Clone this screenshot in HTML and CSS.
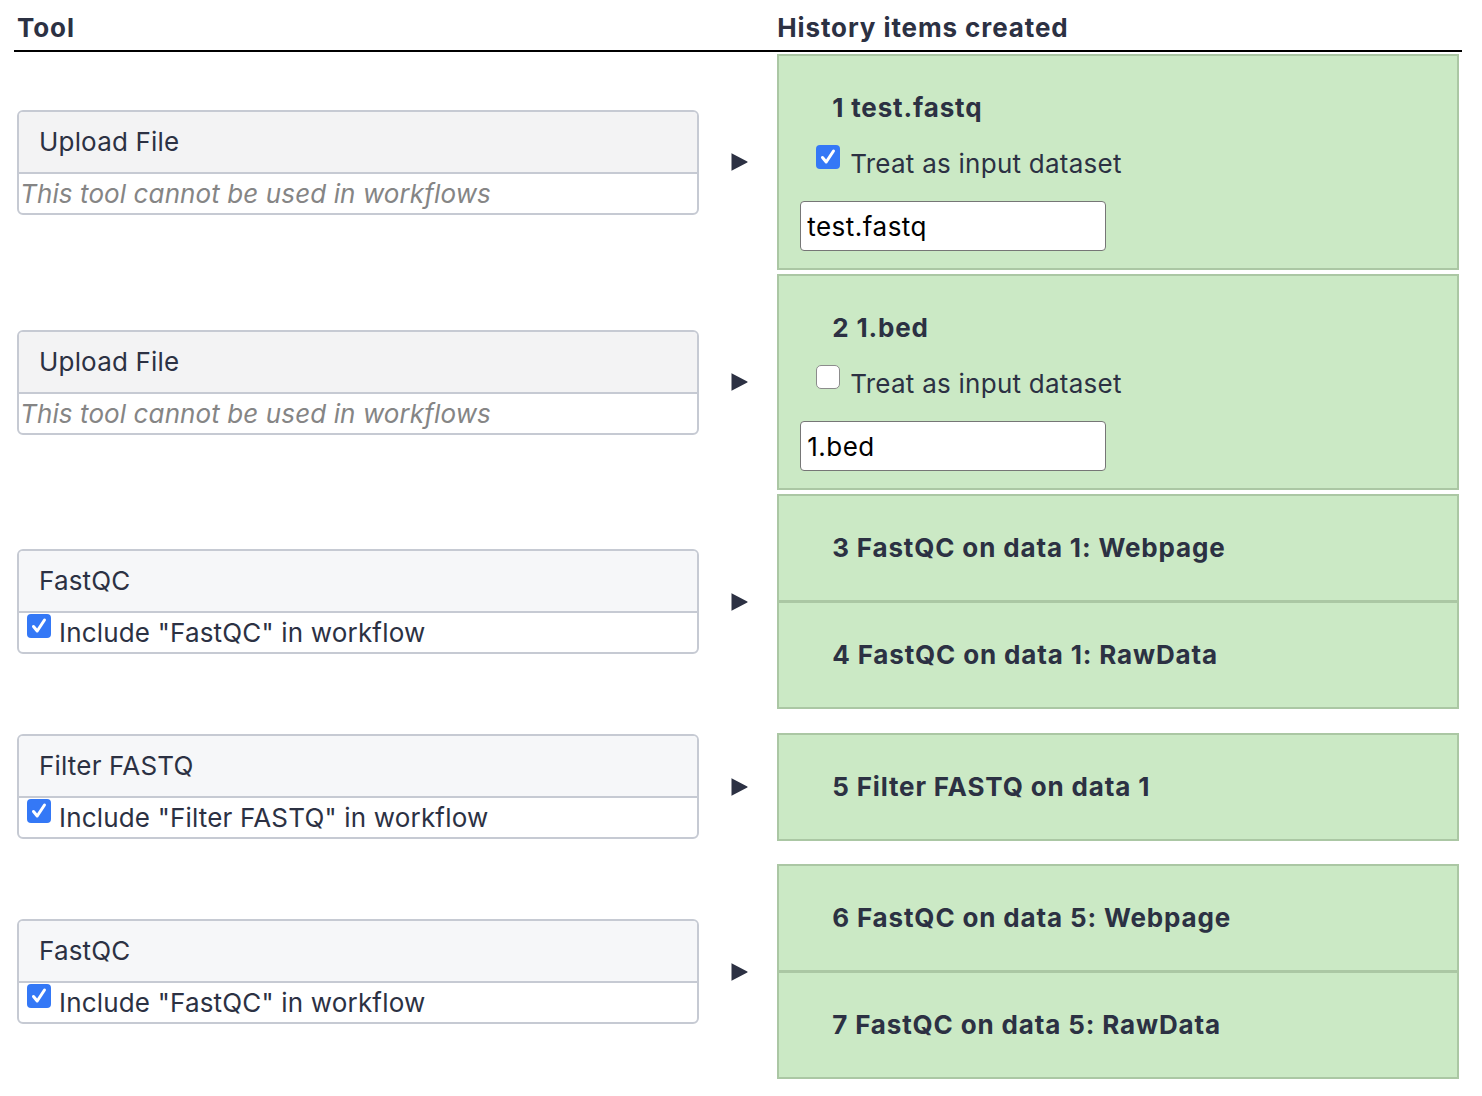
FILE: index.html
```html
<!DOCTYPE html>
<html lang="en">
<head>
<meta charset="utf-8">
<title>Extract Workflow</title>
<link rel="stylesheet" href="styles.css">
</head>
<body>
<table class="extract">
  <colgroup><col class="c-tool"><col class="c-arrow"><col class="c-hist"></colgroup>
  <thead>
    <tr><th>Tool</th><th></th><th>History items created</th></tr>
  </thead>
  <tbody>
    <tr>
      <td>
        <div class="tool-card disabled">
          <div class="tool-title">Upload File</div>
          <div class="tool-body"><em class="muted">This tool cannot be used in workflows</em></div>
        </div>
      </td>
      <td class="arrow"><svg width="17" height="18" viewBox="0 0 17 18"><path d="M0.5 0.8 Q0 0 1 0.4 L16.3 8.4 Q17 9 16.3 9.6 L1 17.6 Q0 18 0.5 17.2 Z" fill="#2c3143"/></svg></td>
      <td>
        <div class="hist-item has-input">
          <div class="hist-title">1 test.fastq</div>
          <label class="check-line hist-check"><span class="cb on"><svg width="24" height="24" viewBox="0 0 24 24"><path d="M6.5 12.5 L10.2 17 L17.5 6" fill="none" stroke="#fff" stroke-width="3" stroke-linecap="round" stroke-linejoin="round"/></svg></span>Treat as input dataset</label>
          <input class="name-input" type="text" value="test.fastq">
        </div>
      </td>
    </tr>
    <tr>
      <td>
        <div class="tool-card disabled">
          <div class="tool-title">Upload File</div>
          <div class="tool-body"><em class="muted">This tool cannot be used in workflows</em></div>
        </div>
      </td>
      <td class="arrow"><svg width="17" height="18" viewBox="0 0 17 18"><path d="M0.5 0.8 Q0 0 1 0.4 L16.3 8.4 Q17 9 16.3 9.6 L1 17.6 Q0 18 0.5 17.2 Z" fill="#2c3143"/></svg></td>
      <td>
        <div class="hist-item has-input">
          <div class="hist-title">2 1.bed</div>
          <label class="check-line hist-check"><span class="cb off"></span>Treat as input dataset</label>
          <input class="name-input" type="text" value="1.bed">
        </div>
      </td>
    </tr>
    <tr>
      <td>
        <div class="tool-card">
          <div class="tool-title">FastQC</div>
          <div class="tool-body"><label class="check-line tool-check"><span class="cb on"><svg width="24" height="24" viewBox="0 0 24 24"><path d="M6.5 12.5 L10.2 17 L17.5 6" fill="none" stroke="#fff" stroke-width="3" stroke-linecap="round" stroke-linejoin="round"/></svg></span>Include "FastQC" in workflow</label></div>
        </div>
      </td>
      <td class="arrow"><svg width="17" height="18" viewBox="0 0 17 18"><path d="M0.5 0.8 Q0 0 1 0.4 L16.3 8.4 Q17 9 16.3 9.6 L1 17.6 Q0 18 0.5 17.2 Z" fill="#2c3143"/></svg></td>
      <td>
        <div class="hist-item"><div class="hist-title">3 FastQC on data 1: Webpage</div></div>
        <div class="hist-item"><div class="hist-title">4 FastQC on data 1: RawData</div></div>
      </td>
    </tr>
    <tr>
      <td>
        <div class="tool-card">
          <div class="tool-title">Filter FASTQ</div>
          <div class="tool-body"><label class="check-line tool-check"><span class="cb on"><svg width="24" height="24" viewBox="0 0 24 24"><path d="M6.5 12.5 L10.2 17 L17.5 6" fill="none" stroke="#fff" stroke-width="3" stroke-linecap="round" stroke-linejoin="round"/></svg></span>Include "Filter FASTQ" in workflow</label></div>
        </div>
      </td>
      <td class="arrow"><svg width="17" height="18" viewBox="0 0 17 18"><path d="M0.5 0.8 Q0 0 1 0.4 L16.3 8.4 Q17 9 16.3 9.6 L1 17.6 Q0 18 0.5 17.2 Z" fill="#2c3143"/></svg></td>
      <td>
        <div class="hist-item"><div class="hist-title">5 Filter FASTQ on data 1</div></div>
      </td>
    </tr>
    <tr>
      <td>
        <div class="tool-card">
          <div class="tool-title">FastQC</div>
          <div class="tool-body"><label class="check-line tool-check"><span class="cb on"><svg width="24" height="24" viewBox="0 0 24 24"><path d="M6.5 12.5 L10.2 17 L17.5 6" fill="none" stroke="#fff" stroke-width="3" stroke-linecap="round" stroke-linejoin="round"/></svg></span>Include "FastQC" in workflow</label></div>
        </div>
      </td>
      <td class="arrow"><svg width="17" height="18" viewBox="0 0 17 18"><path d="M0.5 0.8 Q0 0 1 0.4 L16.3 8.4 Q17 9 16.3 9.6 L1 17.6 Q0 18 0.5 17.2 Z" fill="#2c3143"/></svg></td>
      <td>
        <div class="hist-item"><div class="hist-title">6 FastQC on data 5: Webpage</div></div>
        <div class="hist-item"><div class="hist-title">7 FastQC on data 5: RawData</div></div>
      </td>
    </tr>
  </tbody>
</table>
</body>
</html>
```

FILE: styles.css
```css
html, body {
  margin: 0;
  background: #ffffff;
}

body {
  padding: 6px 20px 0 14px;
  font-family: Inter, "Noto Sans", "Liberation Sans", sans-serif;
  font-size: 26px;
  line-height: 39px;
  letter-spacing: 0.18px;
  color: #2c3143;
}

.extract {
  width: 100%;
  table-layout: fixed;
  border-collapse: separate;
  border-spacing: 0;
}

.c-tool { width: 47.5%; }
.c-arrow { width: 5%; }
.c-hist { width: 47.5%; }

.extract th {
  font-weight: 700;
  letter-spacing: 0.9px;
  text-align: left;
  padding: 2px 3px 3px;
  border-bottom: 2px solid #000;
}

.extract td {
  padding: 2px 3px;
  vertical-align: middle;
}

/* tool card (left column) */
.tool-card {
  margin: 21px 0;
  border: 2px solid #c6cad3;
  border-radius: 6px;
  overflow: hidden;
  background: #fff;
}

.tool-title {
  background: #f6f7f9;
  padding: 10px 20px 11px;
  border-bottom: 2px solid #c6cad3;
}

.tool-card.disabled .tool-title {
  background: #f3f3f4;
}

.tool-body {
  padding: 0 1px;
  min-height: 39px;
}

.muted {
  color: #858585;
  font-style: italic;
  letter-spacing: 0.1px;
}

/* checkbox line */
.check-line {
  display: flex;
  align-items: flex-start;
  gap: 8px;
}

.tool-check {
  padding-left: 7px;
}

.hist-check {
  margin-top: 17px;
  padding-left: 16px;
  gap: 10px;
  letter-spacing: 0.25px;
}

.cb {
  flex: none;
  width: 24px;
  height: 24px;
  margin-top: 1px;
  box-sizing: border-box;
  border-radius: 4px;
  display: block;
}

.cb svg { display: block; }

.cb.on {
  background: #3478f6;
}

.cb.off {
  background: #ffffff;
  border: 1.5px solid #8c8c8c;
  border-radius: 5px;
}

/* arrow column */
.extract td.arrow {
  padding-left: 5px;
  padding-right: 1px;
}

.arrow svg {
  display: block;
  margin: 0 auto;
}

/* history items (right column) */
.hist-item {
  background: #cbe9c5;
  border: 2px solid #abc7a4;
  padding: 32px 21px 33px;
}

.hist-item + .hist-item {
  margin-top: -1px;
}

.hist-item.has-input {
  padding-bottom: 17px;
}

.hist-title {
  font-weight: 700;
  letter-spacing: 0.85px;
  padding-left: 32px;
}

.name-input {
  display: block;
  box-sizing: border-box;
  width: 306px;
  height: 50px;
  margin: 18px 0 0;
  padding: 0 6px;
  border: 1.5px solid #767676;
  border-radius: 4px;
  background: #fff;
  font-family: Inter, "Noto Sans", "Liberation Sans", sans-serif;
  font-size: 26px;
  letter-spacing: 0.5px;
  color: #000;
  outline: none;
}
```
